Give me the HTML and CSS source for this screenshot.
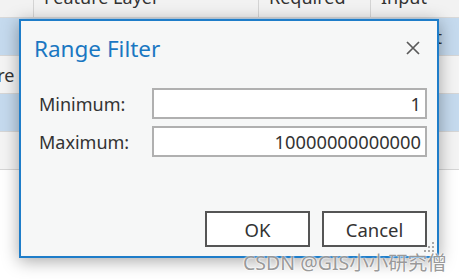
FILE: index.html
```html
<!DOCTYPE html>
<html>
<head>
<meta charset="utf-8">
<link rel="stylesheet" href="styles.css">
</head>
<body>
<div class="table">
  <div class="head">
    <div class="hcell c0"></div>
    <div class="hcell c1">Feature Layer</div>
    <div class="hcell c2">Required</div>
    <div class="hcell c3">Input</div>
  </div>
  <div class="row sel"><span class="right-text">Input</span></div>
  <div class="row plain"><span class="left-text">Feature</span></div>
  <div class="row sel"></div>
  <div class="row plain"></div>
</div>

<div class="dialog">
  <div class="title-bar">
    <div class="title">Range Filter</div>
    <svg class="close" width="14" height="14" viewBox="0 0 14 14"><path d="M1 1L13 13M13 1L1 13" stroke="#5a5a5a" stroke-width="1.7" fill="none"/></svg>
  </div>
  <div class="form">
    <label class="lbl">Minimum:</label>
    <div class="input">1</div>
    <label class="lbl">Maximum:</label>
    <div class="input">10000000000000</div>
  </div>
  <div class="buttons">
    <div class="btn">OK</div>
    <div class="btn">Cancel</div>
  </div>
  <div class="grip">
    <span class="dot d1"></span><span class="dot d2"></span><span class="dot d3"></span>
    <span class="dot d4"></span><span class="dot d5"></span><span class="dot d6"></span>
  </div>
</div>

<div class="watermark">CSDN @GIS小小研究僧</div>
</body>
</html>
```

FILE: styles.css
```css
html, body {
  margin: 0;
  padding: 0;
}
body {
  width: 459px;
  height: 279px;
  overflow: hidden;
  position: relative;
  background: #ffffff;
  font-family: "Noto Sans", "Open Sans", sans-serif;
  color: #333;
}
.table {
  display: flex;
  flex-direction: column;
}
.head {
  display: flex;
  height: 18px;
  background: #f2f2f2;
  border-bottom: 1px solid #d8d8d8;
  box-sizing: border-box;
  overflow: hidden;
}
.hcell {
  box-sizing: border-box;
  border-right: 1px solid #d4d4d4;
  font-size: 18px;
  line-height: 18px;
  color: #333;
  padding-left: 10px;
  margin-top: -12px;
  height: 30px;
}
.c0 { width: 34px; }
.c1 { width: 225px; }
.c2 { width: 112px; }
.c3 { flex: 1; border-right: none; }
.row {
  height: 38px;
  box-sizing: border-box;
  border-bottom: 1px solid #d6d6d6;
  position: relative;
  overflow: hidden;
  font-size: 18px;
}
.row.sel { background: #c5daee; }
.row.plain { background: #f4f4f4; }
.right-text {
  position: absolute;
  left: 396px;
  top: 7px;
}
.left-text {
  position: absolute;
  left: -50px;
  top: 7px;
}
.dialog {
  position: absolute;
  left: 19px;
  top: 19px;
  width: 420px;
  height: 239px;
  box-sizing: border-box;
  border: 2px solid #1e7dc9;
  background: #f6f7f7;
  box-shadow: 0 3px 16px rgba(0,0,0,0.35);
  display: flex;
  flex-direction: column;
}
.title-bar {
  height: 54px;
  display: flex;
  align-items: center;
  justify-content: space-between;
  padding: 0 17px 0 13px;
}
.title {
  font-size: 22.5px;
  color: #1a77c2;
}
.form {
  margin-top: 13px;
  display: grid;
  grid-template-columns: 113px 275px;
  grid-auto-rows: 31px;
  row-gap: 7px;
  padding-left: 18px;
  align-items: center;
}
.lbl {
  font-size: 18px;
  color: #333;
}
.input {
  height: 31px;
  box-sizing: border-box;
  border: 2px solid #b0b0b0;
  background: #ffffff;
  text-align: right;
  padding-right: 4px;
  font-size: 18.3px;
  line-height: 27px;
  color: #333;
}
.buttons {
  margin-top: 54px;
  display: flex;
  justify-content: flex-end;
  gap: 12px;
  padding-right: 10px;
}
.btn {
  width: 105px;
  height: 36px;
  box-sizing: border-box;
  border: 2px solid #555;
  background: #fff;
  display: flex;
  align-items: center;
  justify-content: center;
  font-size: 18.5px;
  color: #333;
}
.grip {
  position: absolute;
  right: 3px;
  bottom: 4px;
  width: 10px;
  height: 10px;
}
.dot {
  position: absolute;
  width: 2px;
  height: 2px;
  background: #a8a8a8;
}
.d1 { left: 8px; top: 0; }
.d2 { left: 4px; top: 4px; }
.d3 { left: 8px; top: 4px; }
.d4 { left: 0; top: 8px; }
.d5 { left: 4px; top: 8px; }
.d6 { left: 8px; top: 8px; }
.watermark {
  position: absolute;
  left: 243px;
  top: 247px;
  font-size: 19.5px;
  color: rgba(140,140,140,0.9);
  text-shadow: 0 0 2px #fff, 0 0 2px #fff;
  white-space: nowrap;
  font-family: "Noto Sans", "Noto Sans CJK SC", sans-serif;
}
```
